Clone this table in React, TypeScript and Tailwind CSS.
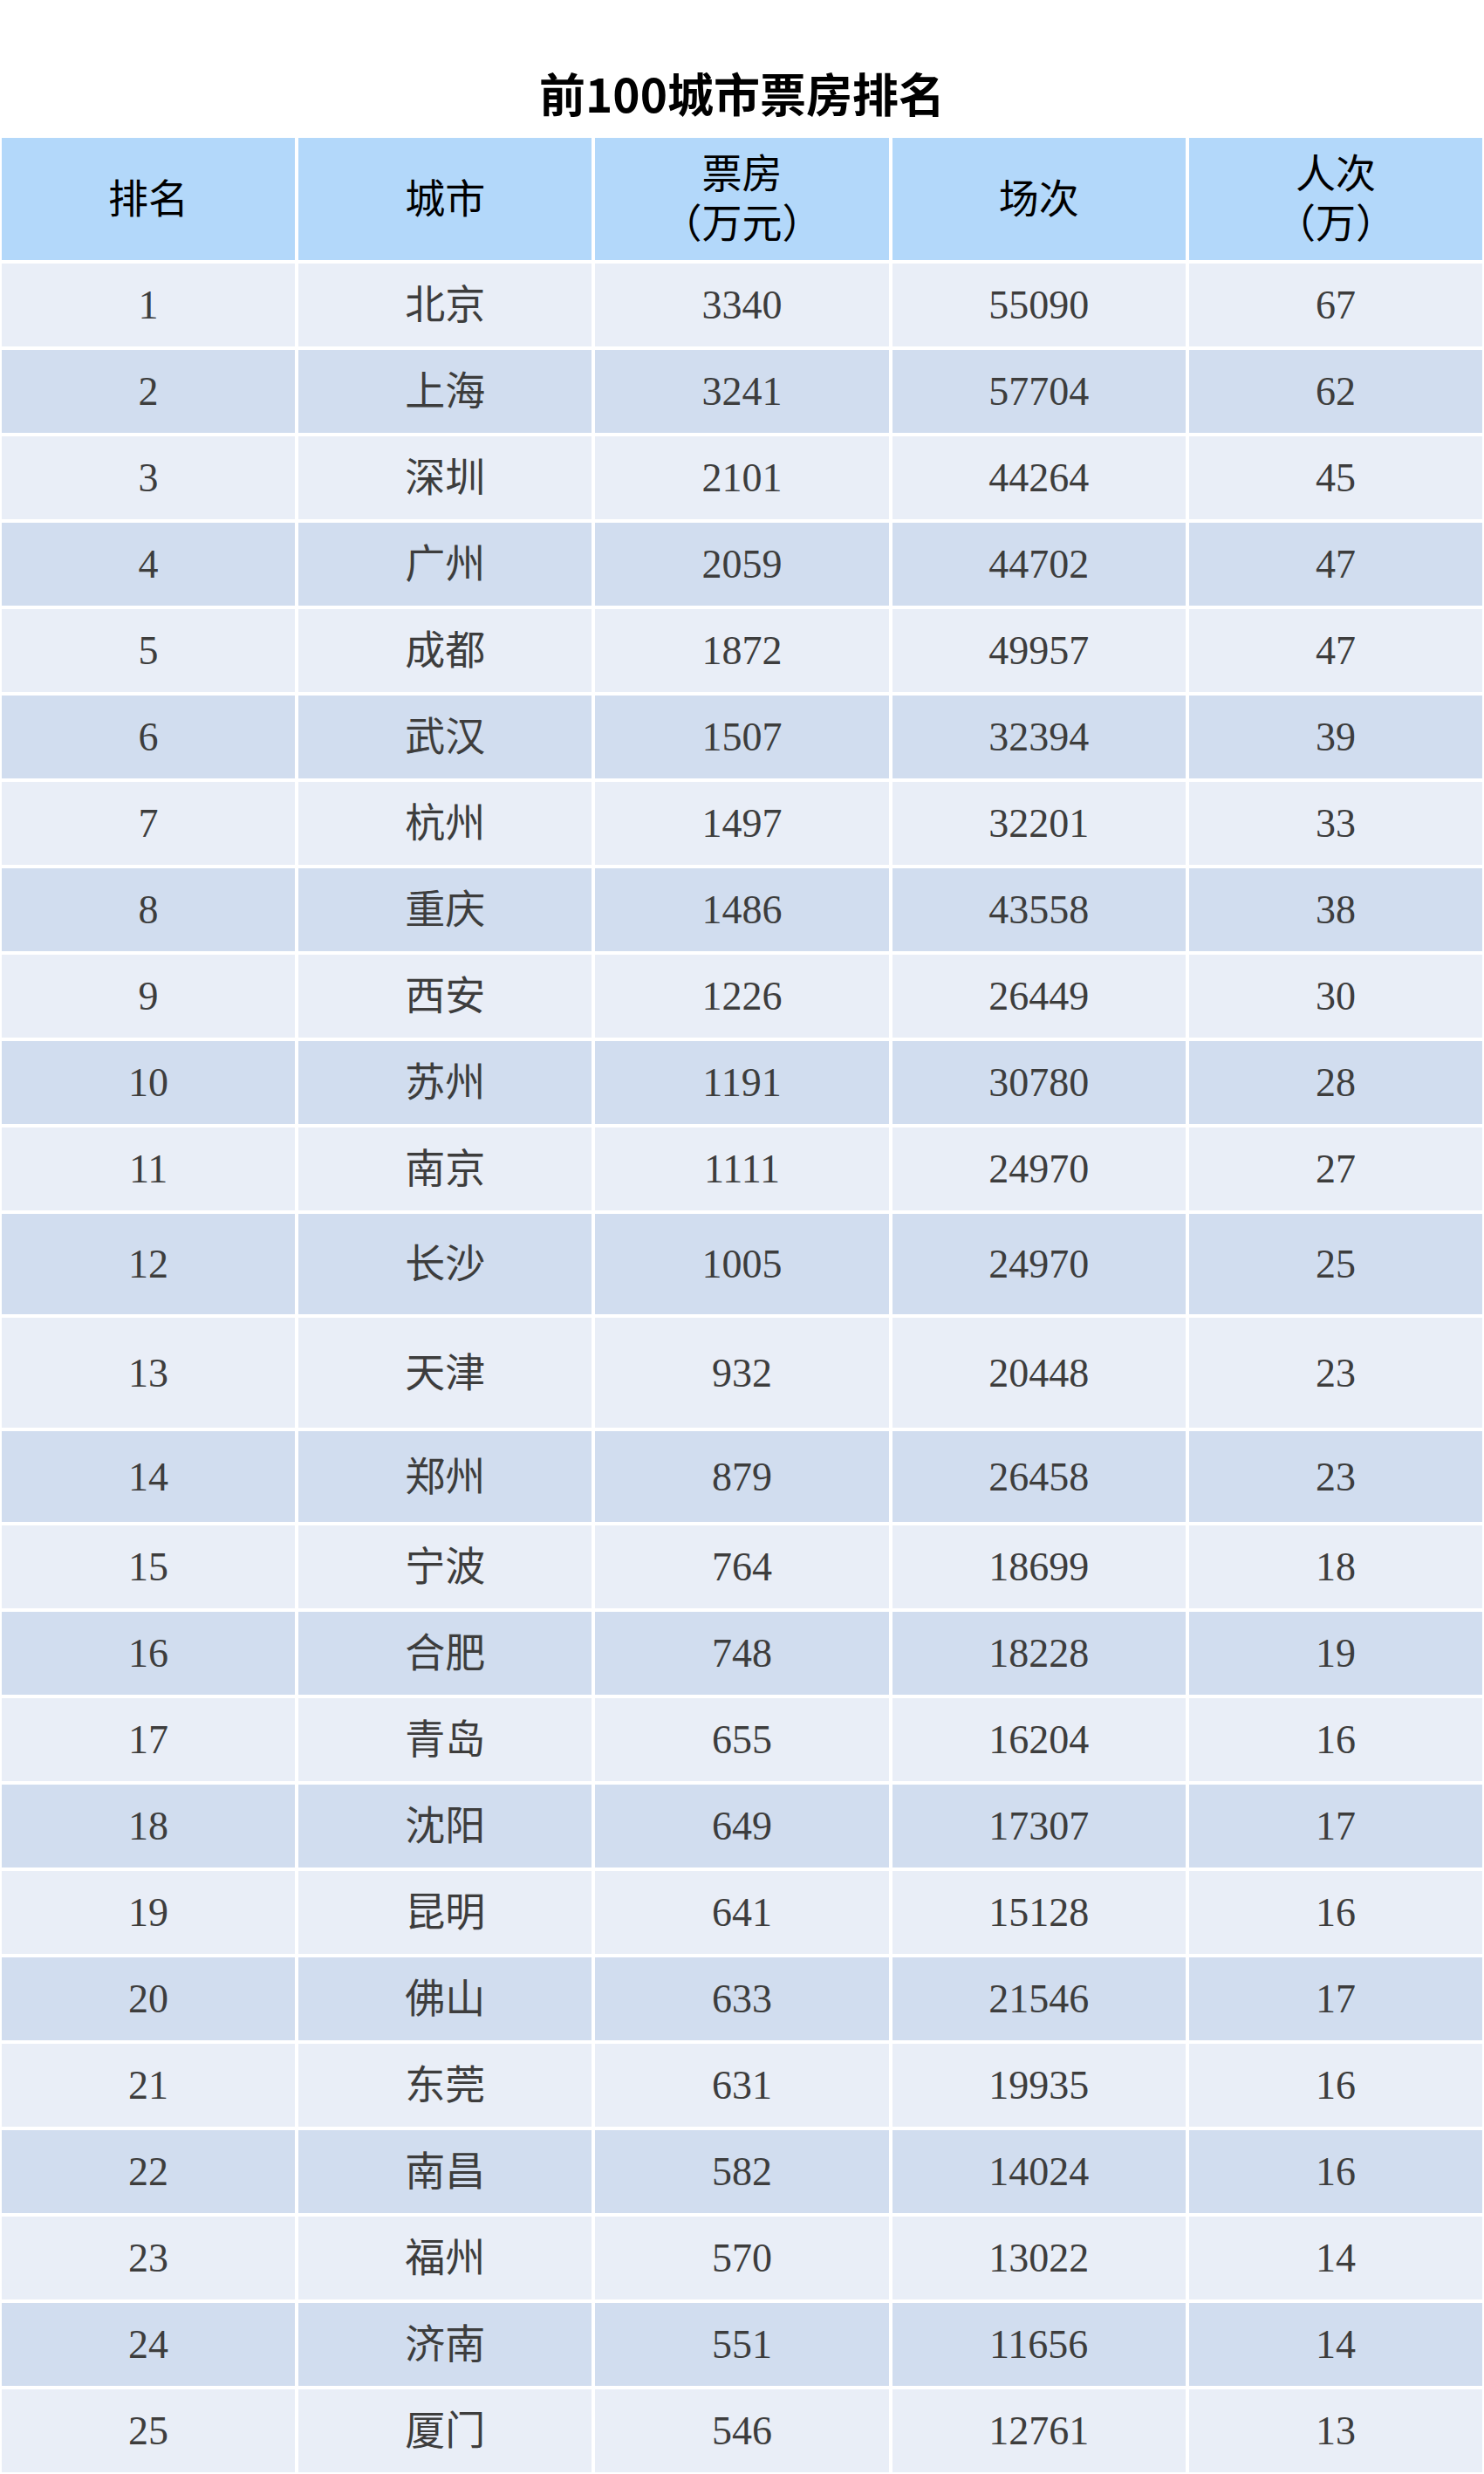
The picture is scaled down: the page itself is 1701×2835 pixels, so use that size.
const rows: [number, string, string, string, string][] = [
  [1, "北京", "3340", "55090", "67"],
  [2, "上海", "3241", "57704", "62"],
  [3, "深圳", "2101", "44264", "45"],
  [4, "广州", "2059", "44702", "47"],
  [5, "成都", "1872", "49957", "47"],
  [6, "武汉", "1507", "32394", "39"],
  [7, "杭州", "1497", "32201", "33"],
  [8, "重庆", "1486", "43558", "38"],
  [9, "西安", "1226", "26449", "30"],
  [10, "苏州", "1191", "30780", "28"],
  [11, "南京", "1111", "24970", "27"],
  [12, "长沙", "1005", "24970", "25"],
  [13, "天津", "932", "20448", "23"],
  [14, "郑州", "879", "26458", "23"],
  [15, "宁波", "764", "18699", "18"],
  [16, "合肥", "748", "18228", "19"],
  [17, "青岛", "655", "16204", "16"],
  [18, "沈阳", "649", "17307", "17"],
  [19, "昆明", "641", "15128", "16"],
  [20, "佛山", "633", "21546", "17"],
  [21, "东莞", "631", "19935", "16"],
  [22, "南昌", "582", "14024", "16"],
  [23, "福州", "570", "13022", "14"],
  [24, "济南", "551", "11656", "14"],
  [25, "厦门", "546", "12761", "13"],
];

// a few rows in the source are taller than the rest
function rowHeight(rank: number) {
  if (rank === 12) return "h-[115px]";
  if (rank === 13) return "h-[126px]";
  if (rank === 14) return "h-[104px]";
  return "h-[95px]";
}

const serif = "font-['Liberation_Serif','Noto_Sans_CJK_SC',serif]";

function HeaderCell({ children }: { children: React.ReactNode }) {
  return (
    <div className="flex flex-col items-center justify-center bg-[#b3d8fa] text-center leading-[57px] text-black [font-feature-settings:'halt']">
      {children}
    </div>
  );
}

export default function App() {
  return (
    <div className="min-h-[2835px] bg-white">
      <h1 className="pt-[80px] pb-[25px] text-center font-['Noto_Sans_CJK_SC',sans-serif] text-[53px] font-bold leading-[53px] text-black">
        前100城市票房排名
      </h1>

      <div className={`flex flex-col gap-[4px] px-[2px] text-[46px] ${serif}`}>
        <div className="grid h-[140px] grid-cols-5 gap-[4px]">
          <HeaderCell>排名</HeaderCell>
          <HeaderCell>城市</HeaderCell>
          <HeaderCell>
            <span>票房</span>
            <span>（万元）</span>
          </HeaderCell>
          <HeaderCell>场次</HeaderCell>
          <HeaderCell>
            <span>人次</span>
            <span>（万）</span>
          </HeaderCell>
        </div>

        {rows.map(([rank, city, box, shows, people]) => {
          const bg = rank % 2 === 1 ? "bg-[#e9eef7]" : "bg-[#d1ddef]";
          return (
            <div
              key={rank}
              className={`grid grid-cols-5 gap-[4px] text-[#3d3d3d] ${rowHeight(rank)}`}
            >
              {[String(rank), city, box, shows, people].map((v, i) => (
                <div key={i} className={`flex items-center justify-center ${bg}`}>
                  {v}
                </div>
              ))}
            </div>
          );
        })}
      </div>
    </div>
  );
}
